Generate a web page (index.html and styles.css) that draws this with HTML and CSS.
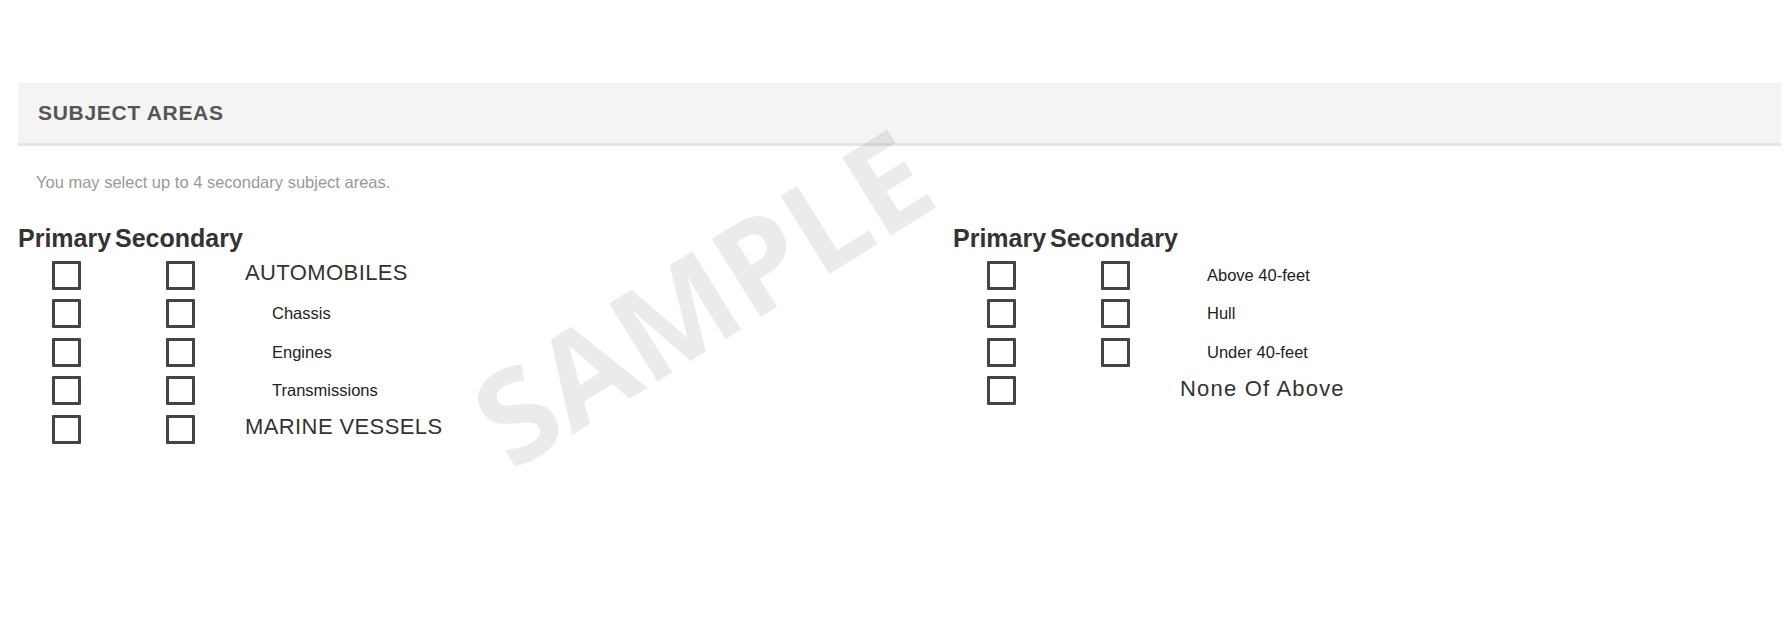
FILE: index.html
```html
<!DOCTYPE html>
<html>
<head>
<meta charset="UTF-8">
<title>Subject Areas</title>
<link rel="stylesheet" href="styles.css">
</head>
<body>
   <div class="page">
      <div class="section-head">
         <h2>SUBJECT AREAS</h2>
      </div>
      <p class="hint">You may select up to 4 secondary subject areas.</p>

      <div class="areas">
         <table class="area-table">
            <tr>
               <th class="col-primary">Primary</th>
               <th class="col-secondary">Secondary</th>
               <th></th>
            </tr>
            <tr>
               <td><input type="checkbox" name="primary" value="automobiles"></td>
               <td><input type="checkbox" name="secondary" value="automobiles"></td>
               <td class="label-top">AUTOMOBILES</td>
            </tr>
            <tr>
               <td><input type="checkbox" name="primary" value="chassis"></td>
               <td><input type="checkbox" name="secondary" value="chassis"></td>
               <td class="label-sub">Chassis</td>
            </tr>
            <tr>
               <td><input type="checkbox" name="primary" value="engines"></td>
               <td><input type="checkbox" name="secondary" value="engines"></td>
               <td class="label-sub">Engines</td>
            </tr>
            <tr>
               <td><input type="checkbox" name="primary" value="transmissions"></td>
               <td><input type="checkbox" name="secondary" value="transmissions"></td>
               <td class="label-sub">Transmissions</td>
            </tr>
            <tr>
               <td><input type="checkbox" name="primary" value="marine"></td>
               <td><input type="checkbox" name="secondary" value="marine"></td>
               <td class="label-top">MARINE VESSELS</td>
            </tr>
         </table>

         <table class="area-table">
            <tr>
               <th class="col-primary">Primary</th>
               <th class="col-secondary">Secondary</th>
               <th></th>
            </tr>
            <tr>
               <td><input type="checkbox" name="primary" value="above40"></td>
               <td><input type="checkbox" name="secondary" value="above40"></td>
               <td class="label-sub">Above 40-feet</td>
            </tr>
            <tr>
               <td><input type="checkbox" name="primary" value="hull"></td>
               <td><input type="checkbox" name="secondary" value="hull"></td>
               <td class="label-sub">Hull</td>
            </tr>
            <tr>
               <td><input type="checkbox" name="primary" value="under40"></td>
               <td><input type="checkbox" name="secondary" value="under40"></td>
               <td class="label-sub">Under 40-feet</td>
            </tr>
            <tr>
               <td><input type="checkbox" name="primary" value="none"></td>
               <td></td>
               <td class="label-top label-none">None Of Above</td>
            </tr>
         </table>
      </div>
   </div>
   <div class="watermark">SAMPLE</div>
</body>
</html>
```

FILE: styles.css
```css
body {
  font-family: "Liberation Sans", Arial, sans-serif;
  margin: 0;
  padding: 0;
  background-color: #fff;
  color: #333;
}
.page {
  padding: 83px 7px 0 18px;
}
.section-head {
  height: 60px;
  background-color: #f4f4f4;
  border-bottom: 3px solid #e6e6e6;
  display: flex;
  align-items: center;
  padding-left: 20px;
}
.section-head h2 {
  margin: 0;
  font-size: 21px;
  letter-spacing: 0.7px;
  color: #555;
  font-weight: bold;
}
.hint {
  margin: 26px 0 0 18px;
  font-size: 16.5px;
  line-height: 20px;
  color: #999;
}
.areas {
  display: grid;
  grid-template-columns: 935px 1fr;
  align-items: start;
  margin-top: 32px;
}
.area-table {
  border-collapse: collapse;
}
.area-table th {
  padding: 0 0 4px 0;
  text-align: left;
  font-size: 25px;
  line-height: 28px;
  color: #333;
}
.area-table .col-primary {
  width: 97px;
}
.area-table .col-secondary {
  width: 130px;
}
.area-table td {
  height: 38.5px;
  padding: 0;
  text-align: center;
  vertical-align: middle;
}
.area-table input[type="checkbox"] {
  appearance: none;
  -webkit-appearance: none;
  box-sizing: border-box;
  display: block;
  margin: 0 auto;
  width: 29px;
  height: 29px;
  border: 3px solid #444;
  border-radius: 1px;
  background: #fff;
}
.area-table td.label-top {
  height: 34.5px;
  text-align: left;
  padding: 0 0 4px 0;
  font-size: 22px;
  letter-spacing: 0.4px;
  color: #333;
}
.area-table td.label-none {
  letter-spacing: 1.2px;
}
.area-table td.label-sub {
  text-align: left;
  padding-left: 27px;
  font-size: 16.5px;
  color: #222;
}
.watermark {
  position: absolute;
  left: 701px;
  top: 296px;
  transform: translate(-50%, -50%) rotate(-32deg);
  font-family: "Open Sans", sans-serif;
  font-weight: bold;
  font-size: 129px;
  line-height: 1;
  color: rgba(0, 0, 0, 0.08);
  pointer-events: none;
}
```
